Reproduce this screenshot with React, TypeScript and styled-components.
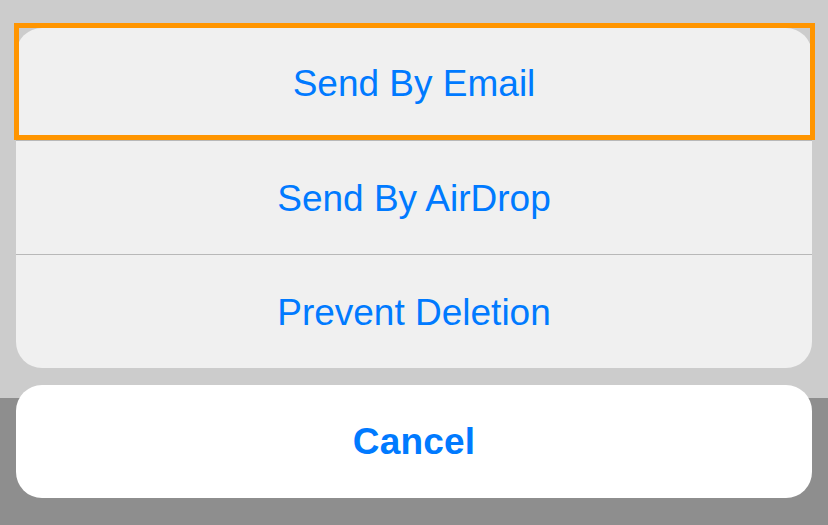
import React from "react";
import styled, { createGlobalStyle } from "styled-components";

const Global = createGlobalStyle`
  html, body { margin: 0; padding: 0; }
  body { width: 828px; height: 525px; overflow: hidden; font-family: "Liberation Sans", Arial, sans-serif; }
`;

const Page = styled.div`
  position: relative;
  width: 828px;
  height: 525px;
  display: flex;
  flex-direction: column;
`;

const Dim = styled.div<{ $h?: number; $bg: string }>`
  background: ${(p) => p.$bg};
  ${(p) => (p.$h ? `height: ${p.$h}px;` : "flex: 1;")}
`;

const Sheet = styled.div`
  position: absolute;
  top: 28px;
  left: 16px;
  right: 16px;
  display: flex;
  flex-direction: column;
  gap: 17px;
`;

const GroupWrap = styled.div`
  position: relative;
`;

const Group = styled.div`
  display: flex;
  flex-direction: column;
  background: #f0f0f0;
  border-radius: 26px;
  overflow: hidden;
`;

const Row = styled.div<{ $h: number; $sep?: boolean }>`
  box-sizing: border-box;
  height: ${(p) => p.$h}px;
  display: flex;
  align-items: center;
  justify-content: center;
  color: #007aff;
  font-size: 37px;
  ${(p) => (p.$sep ? "border-top: 1px solid #b8b8b8; padding-top: 3px;" : "")}
`;

const Focus = styled.div`
  position: absolute;
  top: -5px;
  left: -2px;
  width: 801px;
  height: 117px;
  box-sizing: border-box;
  border: 5px solid #ff9500;
  pointer-events: none;
`;

const CancelButton = styled.div`
  height: 113px;
  background: #ffffff;
  border-radius: 26px;
  display: flex;
  align-items: center;
  justify-content: center;
  color: #007aff;
  font-size: 37px;
  font-weight: 700;
  letter-spacing: 0.2px;
`;

export default function App() {
  return (
    <>
      <Global />
      <Page>
        <Dim $h={398} $bg="#cccccc" />
        <Dim $bg="#8e8e8e" />
        <Sheet>
          <GroupWrap>
            <Group>
              <Row $h={112}>Send By Email</Row>
              <Row $h={114} $sep>Send By AirDrop</Row>
              <Row $h={114} $sep>Prevent Deletion</Row>
            </Group>
            <Focus />
          </GroupWrap>
          <CancelButton>Cancel</CancelButton>
        </Sheet>
      </Page>
    </>
  );
}
